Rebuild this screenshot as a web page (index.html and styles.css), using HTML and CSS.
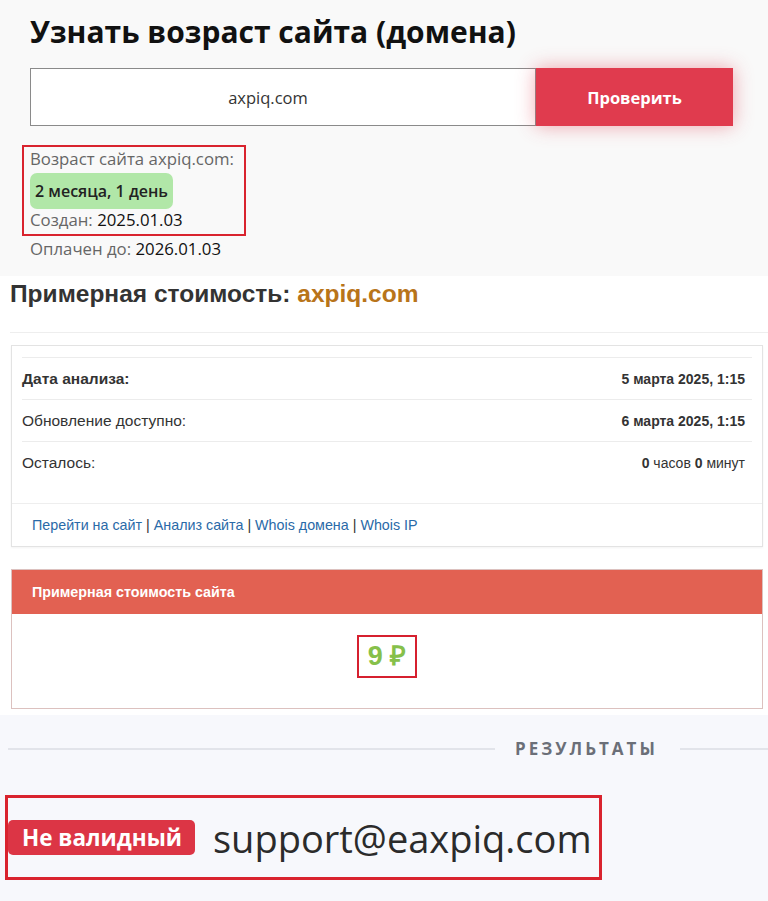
FILE: index.html
```html
<!DOCTYPE html>
<html lang="ru">
<head>
    <meta charset="UTF-8">
    <meta name="viewport" content="width=device-width, initial-scale=1.0">
    <title>Возраст и стоимость сайта</title>
    <link rel="stylesheet" href="styles.css">
</head>
<body>
    <!-- Возраст домена -->
    <section class="age-tool">
        <h1>Узнать возраст сайта (домена)</h1>
        <form class="age-form">
            <input type="text" class="age-input" value="axpiq.com">
            <button type="button" class="age-btn">Проверить</button>
        </form>
        <div class="age-result">
            <p class="age-label">Возраст сайта axpiq.com:</p>
            <span class="age-pill">2 месяца, 1 день</span>
            <p class="age-line">Создан: <b>2025.01.03</b></p>
        </div>
        <p class="age-line age-paid">Оплачен до: <b>2026.01.03</b></p>
    </section>

    <!-- Стоимость сайта -->
    <section class="cost">
        <h2 class="cost-title">Примерная стоимость: <span>axpiq.com</span></h2>
        <hr class="cost-sep">

        <div class="panel">
            <table class="info-table">
                <tr>
                    <td><b>Дата анализа:</b></td>
                    <td class="right"><b>5 марта 2025, 1:15</b></td>
                </tr>
                <tr>
                    <td>Обновление доступно:</td>
                    <td class="right"><b>6 марта 2025, 1:15</b></td>
                </tr>
                <tr>
                    <td>Осталось:</td>
                    <td class="right"><b>0</b> часов <b>0</b> минут</td>
                </tr>
            </table>
            <div class="panel-footer">
                <a href="#">Перейти на сайт</a> | <a href="#">Анализ сайта</a> | <a href="#">Whois домена</a> | <a href="#">Whois IP</a>
            </div>
        </div>

        <div class="price-card">
            <div class="price-head">Примерная стоимость сайта</div>
            <div class="price-body">
                <span class="price-value">9 ₽</span>
            </div>
        </div>
    </section>

    <!-- Результаты проверки почты -->
    <section class="results">
        <div class="divider">
            <span class="divider-line"></span>
            <span class="divider-text">РЕЗУЛЬТАТЫ</span>
            <span class="divider-line short"></span>
        </div>
        <div class="email-row">
            <span class="badge">Не валидный</span>
            <span class="email">support@eaxpiq.com</span>
        </div>
    </section>
</body>
</html>
```

FILE: styles.css
```css
* {
    margin: 0;
    padding: 0;
    box-sizing: border-box;
}

body {
    width: 768px;
    background: #fff;
    font-family: 'Open Sans', sans-serif;
}

/* ---------- возраст домена ---------- */

.age-tool {
    height: 276px;
    background: #f9f9f9;
    padding: 14px 0 0 30px;
}

.age-tool h1 {
    font-size: 30px;
    font-weight: 700;
    line-height: 36px;
    color: #111;
}

.age-form {
    display: flex;
    width: 703px;
    height: 58px;
    margin-top: 18px;
}

.age-input {
    width: 506px;
    padding-right: 30px;
    border: 1px solid #8a8a8a;
    background: #fff;
    font-family: 'Open Sans', sans-serif;
    font-size: 16.5px;
    color: #333;
    text-align: center;
}

.age-btn {
    flex: 1;
    border: none;
    background: #e03b4e;
    color: #fff;
    font-family: 'Open Sans', sans-serif;
    font-size: 16.5px;
    font-weight: 700;
    box-shadow: 0 0 18px rgba(224, 59, 78, 0.45);
}

.age-result {
    width: 224px;
    margin: 19px 0 0 -8px;
    padding: 1px 6px 3px;
    border: 2px solid #d9232e;
}

.age-label {
    font-size: 16.8px;
    line-height: 22px;
    color: #666;
}

.age-pill {
    display: inline-block;
    margin-top: 3px;
    padding: 0 5px;
    height: 36px;
    line-height: 36px;
    background: #b1e7a8;
    border-radius: 7px;
    font-size: 16px;
    font-weight: 600;
    color: #222;
}

.age-line {
    font-size: 16.8px;
    line-height: 22px;
    color: #666;
}

.age-line b {
    font-weight: 500;
    color: #111;
}

.age-paid {
    margin-top: 2px;
}

/* ---------- стоимость ---------- */

.cost {
    height: 439px;
    background: #fff;
    padding: 4px 5px 0 11px;
    font-family: 'Liberation Sans', Arial, sans-serif;
}

.cost-title {
    margin-left: -1px;
    font-size: 24.5px;
    line-height: 28px;
    font-weight: 700;
    color: #333;
}

.cost-title span {
    color: #b8741a;
}

.cost-sep {
    border: none;
    border-top: 1px solid #eee;
    margin: 24px -5px 12px -1px;
}

.panel {
    border: 1px solid #e3e3e3;
    box-shadow: 0 1px 2px rgba(0, 0, 0, 0.05);
    padding: 11px 10px 0;
}

.info-table {
    width: 100%;
    border-collapse: collapse;
    font-size: 15.5px;
    color: #333;
}

.info-table td {
    height: 42px;
    border-top: 1px solid #ececec;
}

.info-table .right {
    text-align: right;
    padding-right: 7px;
    font-size: 14px;
}

.panel-footer {
    margin: 19px -10px 0;
    padding: 0 20px;
    height: 43px;
    line-height: 43px;
    border-top: 1px solid #eee;
    font-size: 14.3px;
    color: #333;
}

.panel-footer a {
    color: #2a6aa8;
    text-decoration: none;
}

.price-card {
    margin-top: 22px;
    border: 1px solid #dcc1bf;
}

.price-head {
    height: 44px;
    line-height: 44px;
    padding: 0 20px;
    background: #e26152;
    color: #fff;
    font-size: 14.3px;
    font-weight: 700;
}

.price-body {
    height: 94px;
    display: flex;
    justify-content: center;
    padding-top: 21px;
}

.price-value {
    height: 43px;
    padding: 0 9px;
    border: 2px solid #d6202f;
    line-height: 39px;
    font-size: 27px;
    font-weight: 700;
    color: #86c04a;
}

/* ---------- результаты ---------- */

.results {
    height: 186px;
    background: #f7f8fc;
    padding-top: 22px;
    font-family: 'Open Sans', sans-serif;
}

.divider {
    display: flex;
    align-items: center;
    padding-left: 8px;
}

.divider-line {
    height: 2px;
    background: #e2e4ea;
    width: 487px;
}

.divider-line.short {
    flex: 1;
}

.divider-text {
    margin: 0 22px 0 20px;
    font-size: 17px;
    font-weight: 700;
    letter-spacing: 3px;
    color: #6b6f78;
}

.email-row {
    display: flex;
    align-items: center;
    gap: 18px;
    width: 597px;
    height: 85px;
    margin: 35px 0 0 5px;
    border: 3px solid #d9232e;
}

.badge {
    height: 35px;
    line-height: 35px;
    padding: 0 13px 0 14px;
    background: #dc3545;
    border-radius: 5px;
    color: #fff;
    font-size: 22.5px;
    font-weight: 700;
}

.email {
    font-size: 38px;
    color: #2b2b2b;
}
```
